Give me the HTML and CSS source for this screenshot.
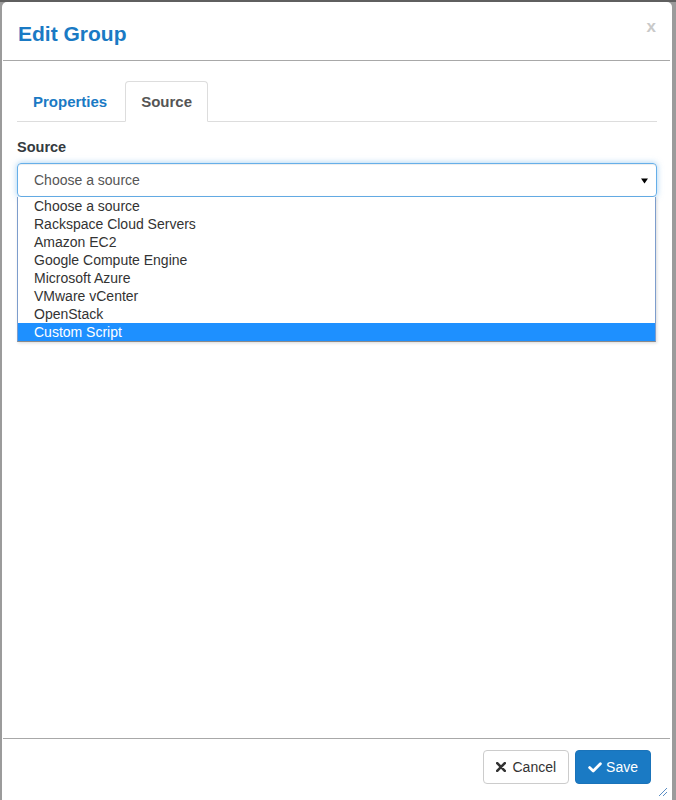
FILE: index.html
```html
<!DOCTYPE html>
<html>
<head>
<meta charset="utf-8">
<link rel="stylesheet" href="styles.css">
</head>
<body>
<div class="backdrop">
  <div class="modal">
    <div class="modal-header">
      <h1 class="title">Edit Group</h1>
      <span class="close">x</span>
    </div>
    <div class="modal-body">
      <ul class="tabs">
        <li class="tab">Properties</li>
        <li class="tab active">Source</li>
      </ul>
      <label class="field-label">Source</label>
      <div class="select-wrap">
        <div class="select">
          <span>Choose a source</span>
          <svg class="caret" width="7" height="6" viewBox="0 0 7 6"><path d="M0 0.5 H7 L3.5 5.5 Z" fill="#000"/></svg>
        </div>
        <ul class="options">
          <li>Choose a source</li>
          <li>Rackspace Cloud Servers</li>
          <li>Amazon EC2</li>
          <li>Google Compute Engine</li>
          <li>Microsoft Azure</li>
          <li>VMware vCenter</li>
          <li>OpenStack</li>
          <li class="selected">Custom Script</li>
        </ul>
      </div>
    </div>
    <div class="modal-footer">
      <button class="btn btn-default">
        <svg width="10" height="10" viewBox="0 0 10 10"><path d="M1.2 1.2 L8.8 8.8 M8.8 1.2 L1.2 8.8" stroke="#333" stroke-width="2.6" stroke-linecap="round"/></svg>
        <span>Cancel</span>
      </button>
      <button class="btn btn-primary">
        <svg width="14" height="11" viewBox="0 0 14 11"><path d="M1.6 5.6 L5.2 9 L12.4 1.8" fill="none" stroke="#fff" stroke-width="2.8" stroke-linecap="round" stroke-linejoin="round"/></svg>
        <span>Save</span>
      </button>
    </div>
    <svg class="resize" width="10" height="10" viewBox="0 0 10 10"><path d="M1 9 L9 1 M5 9 L9 5" stroke="#5b8ec4" stroke-width="1"/></svg>
  </div>
</div>
</body>
</html>
```

FILE: styles.css
```css
* { box-sizing: border-box; }
html, body { margin: 0; padding: 0; }
body {
  font-family: "Liberation Sans", Arial, sans-serif;
  font-size: 14px;
  color: #333;
  background: #999;
}
.backdrop {
  height: 800px;
  background: #9b9b9b;
  border-top: 2px solid #5f5f5f;
  padding: 0 4px 0 2px;
  overflow: hidden;
}
.modal {
  position: relative;
  height: 798px;
  background: #fff;
  border-radius: 5px 5px 0 0;
  display: flex;
  flex-direction: column;
}
.modal-header {
  height: 59px;
  flex: none;
  margin: 0 2px 0 1px;
  border-bottom: 1px solid #a8a8a8;
  display: flex;
  justify-content: space-between;
  align-items: flex-start;
  padding: 0 14px 0 15px;
}
.title {
  margin: 0;
  padding-top: 20px;
  font-size: 21px;
  line-height: 24px;
  font-weight: bold;
  color: #1a7ac4;
}
.close {
  padding-top: 15px;
  font-size: 17px;
  font-weight: bold;
  color: #c9c9c9;
  line-height: 20px;
}
.modal-body {
  flex: 1;
  padding: 20px 15px 0 15px;
}
.tabs {
  list-style: none;
  margin: 0;
  padding: 0;
  display: flex;
  border-bottom: 1px solid #ddd;
}
.tab {
  height: 41px;
  margin-bottom: -1px;
  margin-right: 2px;
  padding: 0 15px;
  display: flex;
  align-items: center;
  font-size: 15px;
  font-weight: bold;
  color: #1a7ac4;
  border: 1px solid transparent;
  border-radius: 4px 4px 0 0;
}
.tab.active {
  color: #555;
  background: #fff;
  border-color: #ddd #ddd transparent;
}
.field-label {
  display: block;
  margin-top: 17px;
  margin-bottom: 7px;
  font-size: 14.5px;
  line-height: 17px;
  font-weight: bold;
  color: #333a40;
}
.select-wrap {
  position: relative;
}
.select {
  height: 34px;
  border: 1px solid #66afe9;
  border-radius: 4px;
  box-shadow: inset 0 1px 1px rgba(0,0,0,.075), 0 0 6px rgba(102,175,233,.6);
  display: flex;
  align-items: center;
  justify-content: space-between;
  padding: 0 8px 0 16px;
  color: #555;
  font-size: 14px;
}
.caret { margin-top: 1px; }
.options {
  position: absolute;
  top: 34px;
  left: 0;
  width: 639px;
  margin: 0;
  padding: 0;
  list-style: none;
  background: #fff;
  border: 1px solid #7d9dcc;
  border-top: none;
  border-bottom-color: #8a8a8a;
  box-shadow: 1px 1px 3px rgba(0,0,0,.15);
}
.options li {
  height: 18px;
  line-height: 18px;
  padding-left: 16px;
  font-size: 14px;
  color: #333;
}
.options li.selected {
  background: #1e90ff;
  color: #fff;
}
.modal-footer {
  height: 62px;
  flex: none;
  margin: 0 2px 0 1px;
  border-top: 1px solid #a8a8a8;
  display: flex;
  justify-content: flex-end;
  align-items: flex-start;
  gap: 6px;
  padding: 11px 19px 0 0;
}
.btn {
  height: 34px;
  display: flex;
  align-items: center;
  gap: 6px;
  padding: 0 12px;
  border-radius: 4px;
  font-family: "Liberation Sans", Arial, sans-serif;
  font-size: 14px;
  border: 1px solid #ccc;
}
.btn-default {
  background: #fff;
  color: #333;
}
.btn-primary {
  background: #1a7ac4;
  border-color: #1a73b9;
  color: #fff;
  gap: 4px;
  padding: 0 12px 0 12px;
}
.resize {
  position: absolute;
  right: 4px;
  bottom: 3px;
}
```
